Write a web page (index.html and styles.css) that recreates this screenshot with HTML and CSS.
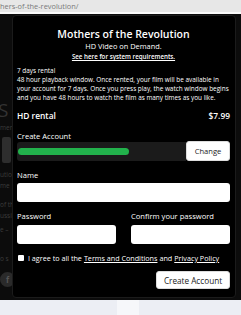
FILE: index.html
```html
<!DOCTYPE html>
<html lang="en">
<head>
<meta charset="utf-8">
<title>Mothers of the Revolution</title>
<link rel="stylesheet" href="styles.css">
</head>
<body>
<div class="urlbar"><span class="url">hers-of-the-revolution/</span></div>
<div class="page">
  <div class="bg-left">
    <div class="bg-big">S</div>
    <div class="bg-txt t1">mer</div>
    <div class="bg-btn"></div>
    <div class="bg-txt t2">utio</div>
    <div class="bg-txt">me</div>
    <div class="bg-txt t3">of th</div>
    <div class="bg-txt">ussi</div>
    <div class="bg-txt t4">e –</div>
    <div class="bg-txt t5">o s</div>
    <div class="bg-fb">f</div>
  </div>

  <div class="modal">
    <h1 class="title">Mothers of the Revolution</h1>
    <p class="subtitle">HD Video on Demand.</p>
    <a class="sysreq" href="#">See here for system requirements.</a>
    <div class="info">
      <p>7 days rental</p>
      <p>48 hour playback window. Once rented, your film will be available in your account for 7 days. Once you press play, the watch window begins and you have 48 hours to watch the film as many times as you like.</p>
    </div>
    <div class="price-row">
      <span>HD rental</span>
      <span>$7.99</span>
    </div>
    <div class="label first">Create Account</div>
    <div class="email-row">
      <div class="email-field"><span class="redact"></span></div>
      <button class="btn change">Change</button>
    </div>
    <div class="label">Name</div>
    <div class="input"></div>
    <div class="pw-grid">
      <div class="label">Password</div>
      <div class="label">Confirm your password</div>
      <div class="input"></div>
      <div class="input"></div>
    </div>
    <label class="agree"><span class="box"></span>I agree to all the <a href="#">Terms and Conditions</a> and <a href="#">Privacy Policy</a></label>
    <div class="actions"><button class="btn create">Create Account</button></div>
  </div>
</div>
<div class="footer"><div class="footer-tab"></div></div>
</body>
</html>
```
FILE: styles.css
```css
* { box-sizing: border-box; margin: 0; padding: 0; }
html, body { width: 241px; height: 315px; overflow: hidden; }
body {
  font-family: "Open Sans", "DejaVu Sans", sans-serif;
  background: #0b0b0b;
  color: #fff;
}
.urlbar {
  height: 14px;
  background: #e7e7e7;
  border-bottom: 2px solid #fafafa;
  display: flex;
  align-items: center;
}
.url {
  font-size: 7.4px;
  color: #7a7a7a;
  line-height: 12px;
}
.page {
  position: relative;
  height: 286px;
  background: #0c0c0c;
  overflow: hidden;
}
.bg-left {
  width: 14px;
  padding-top: 86px;
  display: flex;
  flex-direction: column;
  color: #3c3c3c;
  font-size: 6.5px;
  line-height: 11px;
  white-space: nowrap;
  overflow: hidden;
}
.bg-big { font-size: 19px; line-height: 20px; color: #333; margin-left: -2px; }
.bg-txt.t1 { margin-top: 2px; }
.bg-btn { width: 9px; height: 26px; background: #2e2e2e; border-radius: 2px; margin: 4px 0 0 2px; }
.bg-txt.t2 { margin-top: 6px; }
.bg-txt.t3 { margin-top: 8px; }
.bg-txt.t4 { margin-top: 3px; }
.bg-txt.t5 { margin-top: 18px; }
.bg-fb {
  width: 15px; height: 15px; border-radius: 50%;
  background: #2a2a2a; color: #555; font-size: 8px; line-height: 15px;
  text-align: center; margin: 8px 0 0 0; font-weight: 700;
}

.modal {
  position: absolute;
  left: 12px;
  top: 1px;
  width: 224px;
  height: 283px;
  background: #000;
  border: 1px solid #1b1b1b;
  border-radius: 4px;
  padding: 11px 5px 0 4px;
  display: flex;
  flex-direction: column;
}
.title {
  font-size: 10.5px;
  line-height: 14px;
  font-weight: 600;
  text-align: center;
}
.subtitle {
  font-size: 7.4px;
  line-height: 11px;
  text-align: center;
}
.sysreq {
  font-size: 6.2px;
  line-height: 10px;
  font-weight: 600;
  text-align: center;
  color: #fff;
  text-decoration: underline;
}
.info {
  margin-top: 4px;
  font-size: 6.4px;
  line-height: 9px;
}
.price-row {
  margin-top: 8px;
  display: flex;
  justify-content: space-between;
  font-size: 8.4px;
  line-height: 11px;
  font-weight: 600;
}
.label {
  font-size: 7.6px;
  line-height: 10px;
  margin-top: 9px;
}
.label.first { margin-top: 10px; }
.email-row {
  margin-top: 1px;
  display: flex;
  height: 19px;
}
.email-field {
  flex: 1;
  background: #1b1b1b;
  border-radius: 3px 0 0 3px;
  display: flex;
  align-items: center;
  padding-left: 1px;
}
.redact {
  width: 111px;
  height: 7px;
  background: #22b24c;
  border-radius: 4px;
  filter: blur(0.6px);
}
.btn {
  font-family: inherit;
  background: #fff;
  color: #222;
  border: 1px solid #ddd;
  border-radius: 3px;
  font-size: 7.6px;
  cursor: pointer;
}
.btn.change { width: 44px; height: 20px; margin-top: -1px; }
.input {
  margin-top: 3px;
  height: 19px;
  background: #fff;
  border-radius: 3px;
}
.pw-grid {
  display: grid;
  grid-template-columns: 99px 99px;
  column-gap: 15px;
}
.pw-grid .input { margin-top: 4px; }
.agree {
  margin-top: 9px;
  font-size: 7.2px;
  line-height: 10px;
  display: flex;
  align-items: center;
  white-space: nowrap;
}
.agree a { color: #fff; text-decoration: underline; margin: 0 2px; }
.box {
  width: 6px; height: 6px; background: #fff; border-radius: 1px;
  margin: 0 4px 0 1px;
}
.actions {
  margin-top: 8px;
  display: flex;
  justify-content: flex-end;
}
.btn.create { width: 74px; height: 18px; font-size: 8.2px; }
.footer {
  height: 15px;
  background: #eceef4;
  display: flex;
}
.footer-tab { margin-left: 117px; width: 22px; height: 15px; background: #f6f7fa; }
```
